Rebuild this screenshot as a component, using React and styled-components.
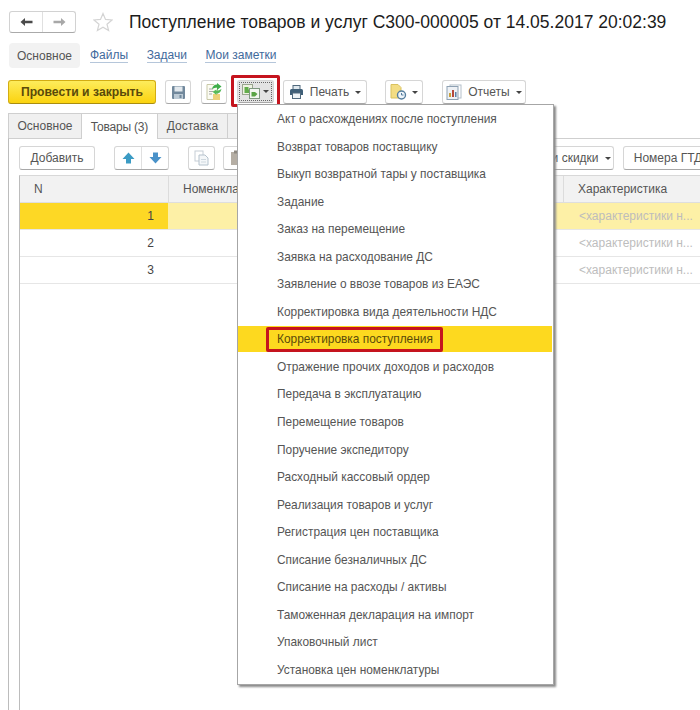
import React from 'react';
import styled, { createGlobalStyle } from 'styled-components';

const GlobalStyle = createGlobalStyle`
    html, body {
        margin: 0;
        padding: 0;
        background: #fff;
        overflow: hidden;
    }
    body {
        font-family: 'Liberation Sans', Arial, sans-serif;
        font-size: 12px;
        color: #4b4b4b;
    }
`;

const Page = styled.div`
    position: relative;
    width: 700px;
    height: 710px;
    overflow: hidden;
    display: flex;
    flex-direction: column;
    background: #fff;
`;

const TitleBar = styled.div`
    display: flex;
    align-items: center;
    height: 22px;
    margin: 11px 0 0 9px;
`;

const NavGroup = styled.div`
    display: flex;
    width: 67px;
    height: 22px;
    border: 1px solid #d2d2d2;
    border-bottom-color: #aaa;
    border-radius: 3px;
    box-sizing: border-box;
`;

const NavButton = styled.div`
    flex: 1;
    display: flex;
    align-items: center;
    justify-content: center;
    & + & {
        border-left: 1px solid #e0e0e0;
    }
`;

const StarWrap = styled.div`
    display: flex;
    margin: 0 16px 0 17px;
`;

const Title = styled.h1`
    margin: 0;
    font-size: 17.5px;
    font-weight: normal;
    color: #1c1c1c;
    white-space: nowrap;
`;

const Sections = styled.div`
    display: flex;
    align-items: center;
    height: 25px;
    margin: 10px 0 0 9px;
`;

const SectionCurrent = styled.div`
    display: flex;
    align-items: center;
    height: 25px;
    padding: 0 8px;
    margin-right: 10px;
    background: #f2f2f2;
    border-radius: 4px;
    color: #555;
`;

const SectionLink = styled.a`
    margin-right: 18.5px;
    color: #3f6a9c;
    border-bottom: 1px solid #b5c6da;
    line-height: 13px;
`;

const Toolbar = styled.div`
    display: flex;
    align-items: center;
    height: 24px;
    margin: 12px 0 0 8px;
`;

const PostButton = styled.div`
    display: flex;
    align-items: center;
    justify-content: center;
    width: 148px;
    height: 24px;
    box-sizing: border-box;
    border: 1px solid #d3ad12;
    border-bottom-color: #a98d10;
    border-radius: 3px;
    background: linear-gradient(#fdec5c, #fbd30f);
    color: #5a4a0a;
    font-weight: bold;
    font-size: 12.2px;
`;

const ToolButton = styled.div`
    display: flex;
    align-items: center;
    justify-content: center;
    flex-shrink: 0;
    gap: ${p => p.$gap || 5}px;
    width: ${p => p.$w}px;
    height: ${p => p.$h || 24}px;
    margin-left: ${p => p.$ml || 0}px;
    box-sizing: border-box;
    border: 1px solid #d6d6d6;
    border-bottom-color: #a8a8a8;
    border-radius: 3px;
    background: ${p => p.$pressed ? '#e3e3e3' : '#fff'};
    outline: ${p => p.$pressed ? '1px dotted #666' : 'none'};
    outline-offset: -3px;
    color: #555;
    white-space: nowrap;
`;

const Marked = styled.div`
    display: flex;
    margin: -5px 0 -3px 4px;
    padding: 2px 3px 1px;
    border: 3px solid #c5141e;
    border-radius: 2px;
`;

const Caret = styled.span`
    width: 0;
    height: 0;
    border-left: 3px solid transparent;
    border-right: 3px solid transparent;
    border-top: 3px solid #444;
    flex-shrink: 0;
`;

const TabStrip = styled.div`
    display: flex;
    height: 25px;
    margin: 9px 0 0 8px;
`;

const Tab = styled.div`
    display: flex;
    align-items: center;
    justify-content: center;
    width: ${p => p.$w}px;
    box-sizing: border-box;
    border: 1px solid #cfcfcf;
    border-bottom: none;
    border-left-width: ${p => p.$first ? 1 : 0}px;
    background: ${p => p.$active ? '#fff' : '#f0f0f0'};
    color: #555;
    position: relative;
    z-index: ${p => p.$active ? 1 : 0};
    margin-bottom: ${p => p.$active ? -1 : 0}px;
    letter-spacing: ${p => p.$active ? -0.2 : 0}px;
`;

const TabPanel = styled.div`
    flex: 1;
    display: flex;
    flex-direction: column;
    margin-left: 8px;
    padding: 7px 0 0 10px;
    border-left: 1px solid #bcbcbc;
    border-top: 1px solid #cfcfcf;
`;

const PanelToolbar = styled.div`
    display: flex;
    align-items: center;
    height: 24px;
`;

const ArrowGroup = styled.div`
    display: flex;
    width: 55px;
    height: 24px;
    margin-left: 19px;
    box-sizing: border-box;
    border: 1px solid #d6d6d6;
    border-bottom-color: #a8a8a8;
    border-radius: 3px;
`;

const ArrowCell = styled.div`
    flex: 1;
    display: flex;
    align-items: center;
    justify-content: center;
    & + & {
        border-left: 1px solid #e0e0e0;
    }
`;

const RightButtons = styled.div`
    display: flex;
    margin-left: auto;
    margin-right: -13px;
    gap: 9px;
`;

const Table = styled.div`
    flex: 1;
    margin-top: 5px;
    border-left: 1px solid #bcbcbc;
    border-top: 1px solid #d8d8d8;
`;

const Row = styled.div`
    display: grid;
    grid-template-columns: 148px 395px 1fr;
    height: 26px;
    border-bottom: 1px solid ${p => p.$head ? '#dedede' : '#e6e6e6'};
    background: ${p => p.$head ? '#f2f2f2' : '#fff'};
`;

const Cell = styled.div`
    display: flex;
    align-items: center;
    padding: 0 14px;
    overflow: hidden;
    white-space: nowrap;
    color: #555;
    background: ${p => p.$bg || 'transparent'};
    border-left: ${p => p.$divider ? '1px solid #dcdcdc' : 'none'};
`;

const NumberCell = styled(Cell)`
    justify-content: flex-end;
    color: #444;
`;

const HintCell = styled(Cell)`
    padding-left: 16px;
    color: #bdbdbd;
`;

const Menu = styled.div`
    position: absolute;
    left: 237px;
    top: 104px;
    width: 317px;
    height: 581px;
    box-sizing: border-box;
    display: flex;
    flex-direction: column;
    gap: 1.55px;
    padding: 1px 1px 0 0;
    background: #fff;
    border: 1px solid #a6a6a6;
    box-shadow: 2px 2px 2px #8a8a8a;
    z-index: 5;
    font-size: 11.9px;
`;

const MenuItem = styled.div`
    display: flex;
    align-items: center;
    flex-shrink: 0;
    height: 26px;
    padding-left: 39px;
    color: #555;
    white-space: nowrap;
    background: ${p => p.$selected ? '#fdd91f' : 'transparent'};
`;

const MenuMark = styled.span`
    display: flex;
    align-items: center;
    height: 25px;
    box-sizing: border-box;
    margin-left: -11px;
    padding: 0 7px 0 8px;
    border: 3px solid #c5141e;
    border-radius: 2px;
    color: #5a4a0a;
`;

const ArrowIcon = ({ dir, color }) => (
    <svg width="13" height="10" viewBox="0 0 13 10">
        <path
            d={dir === 'left' ? 'M0.5 5 L5 1 V3.8 H12.5 V6.2 H5 V9 Z' : 'M12.5 5 L8 1 V3.8 H0.5 V6.2 H8 V9 Z'}
            fill={color}
        />
    </svg>
);

const StarIcon = () => (
    <svg width="20" height="20" viewBox="0 0 20 20">
        <path
            d="M10 1.5 L12.5 7.4 L19 8 L14 12.2 L15.6 18.6 L10 15.2 L4.4 18.6 L6 12.2 L1 8 L7.5 7.4 Z"
            fill="#fff"
            stroke="#d4d4d4"
            strokeWidth="1.2"
        />
    </svg>
);

const SaveIcon = () => (
    <svg width="15" height="15" viewBox="0 0 15 15">
        <rect x="1" y="1" width="13" height="13" rx="1" fill="#71889c" />
        <rect x="3.5" y="1.5" width="8" height="5" fill="#e3e9ee" />
        <rect x="3" y="9" width="9" height="5" fill="#bccad5" />
        <rect x="8.5" y="10" width="2" height="3" fill="#71889c" />
    </svg>
);

const PostIcon = () => (
    <svg width="18" height="18" viewBox="0 0 18 18">
        <path d="M2 1.5 H9 L12.5 5 V16.5 H2 Z" fill="#fbfbf2" stroke="#c9c9a8" />
        <path d="M4 6 H8 M4 8.5 H8 M4 11 H7" stroke="#a9a9a9" />
        <rect x="8" y="11" width="7" height="6" fill="#ecd27a" />
        <path d="M7 6 Q8 1.5 12 1.5 V0 L16.5 3.5 L12 7 V4.5 Q9.5 4.5 7 6 Z" fill="#3fae4a" />
        <path d="M16.5 6 Q15.5 10.5 11.5 10.5 V12 L7.5 8.8 L11.5 6.5 V7.8 Q14 7.8 16.5 6 Z" fill="#56bb58" />
    </svg>
);

const CreateIcon = () => (
    <svg width="18" height="15" viewBox="0 0 18 15">
        <rect x="0.5" y="0.5" width="10" height="10" fill="#eef2e2" stroke="#9aa68f" />
        <path d="M2.5 3 H6.5 V5.5 H9 V9 H2.5 Z" fill="#62ad4a" />
        <rect x="7.5" y="4.5" width="10" height="10" fill="#f3f7f1" stroke="#7f9880" />
        <path d="M9.5 8 H13 L15.5 10 L13 12.5 H9.5 Z" fill="#59a445" />
    </svg>
);

const PrintIcon = () => (
    <svg width="15" height="14" viewBox="0 0 15 14">
        <rect x="4" y="0.5" width="7" height="4" fill="#dfe8ee" stroke="#50697d" />
        <path d="M1 5.5 Q1 4 2.5 4 H12.5 Q14 4 14 5.5 V10 H1 Z" fill="#3f5f78" />
        <rect x="3.5" y="8" width="8" height="5.5" fill="#eef3f6" stroke="#50697d" />
    </svg>
);

const ClockDocIcon = () => (
    <svg width="17" height="16" viewBox="0 0 17 16">
        <path d="M1 0.5 H8 L11 3.5 V14 H1 Z" fill="#f3dd84" stroke="#d9c25f" />
        <circle cx="11.5" cy="11" r="4" fill="#eef5fa" stroke="#557d9e" strokeWidth="1.4" />
        <path d="M11.5 9 V11 H13.5" stroke="#557d9e" fill="none" />
    </svg>
);

const ReportIcon = () => (
    <svg width="16" height="16" viewBox="0 0 16 16">
        <rect x="4" y="1" width="11" height="13" fill="#fff" stroke="#b4bfca" />
        <rect x="1" y="2.5" width="11" height="13" fill="#eef1f5" stroke="#8ea1b3" />
        <rect x="3" y="9" width="2" height="4" fill="#c9a13b" />
        <rect x="6" y="6" width="2" height="7" fill="#b5493d" />
        <rect x="9" y="8" width="1.5" height="5" fill="#5a7fa6" />
    </svg>
);

const UpDownIcon = ({ down }) => (
    <svg width="13" height="12" viewBox="0 0 13 12">
        <path
            d={down
                ? 'M4 0.5 H9 V5 H12.5 L6.5 11.5 L0.5 5 H4 Z'
                : 'M6.5 0.5 L12.5 7 H9 V11.5 H4 V7 H0.5 Z'}
            fill={down ? '#4a92c9' : '#3b9bc4'}
        />
    </svg>
);

const CopyIcon = () => (
    <svg width="15" height="16" viewBox="0 0 15 16">
        <rect x="1" y="1" width="8" height="10" fill="#fff" stroke="#c6ced6" />
        <path d="M5 5 H11 L14 8 V15 H5 Z" fill="#f4f7f9" stroke="#b5c2cd" />
        <path d="M7 9.5 H12 M7 12 H12" stroke="#cfd8df" />
    </svg>
);

const PasteIcon = () => (
    <svg width="14" height="16" viewBox="0 0 14 16">
        <rect x="1" y="2" width="12" height="13" fill="#b5aea4" />
        <rect x="4" y="0.5" width="6" height="3" fill="#8f8a82" />
    </svg>
);

const menuItems = [
    'Акт о расхождениях после поступления',
    'Возврат товаров поставщику',
    'Выкуп возвратной тары у поставщика',
    'Задание',
    'Заказ на перемещение',
    'Заявка на расходование ДС',
    'Заявление о ввозе товаров из ЕАЭС',
    'Корректировка вида деятельности НДС',
    'Корректировка поступления',
    'Отражение прочих доходов и расходов',
    'Передача в эксплуатацию',
    'Перемещение товаров',
    'Поручение экспедитору',
    'Расходный кассовый ордер',
    'Реализация товаров и услуг',
    'Регистрация цен поставщика',
    'Списание безналичных ДС',
    'Списание на расходы / активы',
    'Таможенная декларация на импорт',
    'Упаковочный лист',
    'Установка цен номенклатуры',
];

const SELECTED_ITEM = 'Корректировка поступления';
const HINT = '<характеристики н...';

const App = () => (
    <Page>
        <GlobalStyle />

        <TitleBar>
            <NavGroup>
                <NavButton><ArrowIcon dir="left" color="#4a4a4a" /></NavButton>
                <NavButton><ArrowIcon dir="right" color="#a8a8a8" /></NavButton>
            </NavGroup>
            <StarWrap><StarIcon /></StarWrap>
            <Title>Поступление товаров и услуг С300-000005 от 14.05.2017 20:02:39</Title>
        </TitleBar>

        <Sections>
            <SectionCurrent>Основное</SectionCurrent>
            <SectionLink>Файлы</SectionLink>
            <SectionLink>Задачи</SectionLink>
            <SectionLink>Мои заметки</SectionLink>
        </Sections>

        <Toolbar>
            <PostButton>Провести и закрыть</PostButton>
            <ToolButton $w={26} $ml={9}><SaveIcon /></ToolButton>
            <ToolButton $w={26} $ml={10}><PostIcon /></ToolButton>
            <Marked>
                <ToolButton $w={37} $h={23} $pressed $gap={3}>
                    <CreateIcon />
                    <Caret />
                </ToolButton>
            </Marked>
            <ToolButton $w={84} $ml={3} $gap={6}>
                <PrintIcon />
                Печать
                <Caret />
            </ToolButton>
            <ToolButton $w={38} $ml={18}>
                <ClockDocIcon />
                <Caret />
            </ToolButton>
            <ToolButton $w={84} $ml={19} $gap={6}>
                <ReportIcon />
                Отчеты
                <Caret />
            </ToolButton>
        </Toolbar>

        <TabStrip>
            <Tab $w={74} $first>Основное</Tab>
            <Tab $w={76} $active>Товары (3)</Tab>
            <Tab $w={70}>Доставка</Tab>
            <Tab $w={60}>Прочее</Tab>
        </TabStrip>

        <TabPanel>
            <PanelToolbar>
                <ToolButton $w={76}>Добавить</ToolButton>
                <ArrowGroup>
                    <ArrowCell><UpDownIcon /></ArrowCell>
                    <ArrowCell><UpDownIcon down /></ArrowCell>
                </ArrowGroup>
                <ToolButton $w={27} $ml={19}><CopyIcon /></ToolButton>
                <ToolButton $w={27} $ml={8}><PasteIcon /></ToolButton>
                <RightButtons>
                    <ToolButton $w={100} $gap={6}>
                        Цены и скидки
                        <Caret />
                    </ToolButton>
                    <ToolButton $w={90}>Номера ГТД</ToolButton>
                </RightButtons>
            </PanelToolbar>

            <Table>
                <Row $head>
                    <Cell>N</Cell>
                    <Cell $divider>Номенклатура</Cell>
                    <Cell $divider>Характеристика</Cell>
                </Row>
                {[1, 2, 3].map(n => (
                    <Row key={n}>
                        <NumberCell $bg={n === 1 ? '#fdd825' : undefined}>{n}</NumberCell>
                        <Cell $bg={n === 1 ? '#fdf0a6' : undefined} />
                        <HintCell $bg={n === 1 ? '#fdf0a6' : undefined}>{HINT}</HintCell>
                    </Row>
                ))}
            </Table>
        </TabPanel>

        <Menu>
            {menuItems.map(item => (
                item === SELECTED_ITEM ? (
                    <MenuItem key={item} $selected>
                        <MenuMark>{item}</MenuMark>
                    </MenuItem>
                ) : (
                    <MenuItem key={item}>{item}</MenuItem>
                )
            ))}
        </Menu>
    </Page>
);

export default App;
